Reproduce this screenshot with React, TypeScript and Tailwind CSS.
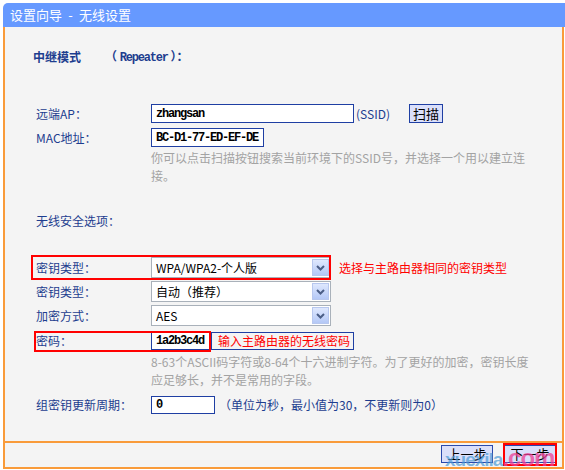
import React from "react";

const label = "w-[115px] shrink-0 text-[#1d3d8f]";
const mono = "font-['Liberation_Mono','Noto_Sans_CJK_SC',monospace] font-bold tracking-[-1.2px] text-black";

function Chevron() {
    return <svg width="9" height="6" viewBox="0 0 9 6">
        <path d="M1 1 L4.5 4.5 L8 1" fill="none" stroke="#4b5e86" strokeWidth="2" />
    </svg>
}

function Select({ value, w = 180 }: { value: string; w?: number }) {
    return <div className="flex h-[21px] items-center justify-between border border-[#a9b1ba] bg-white pl-[4px] pr-[1px] text-black" style={{ width: w }}>
        <span className="leading-none">{value}</span>
        <span className="flex h-[17px] w-[17px] items-center justify-center border border-[#b7c7ee] bg-gradient-to-b from-[#dfe8fe] to-[#b4c8f6]">
            <Chevron />
        </span>
    </div>
}

function Input({ value, w }: { value: string; w: number }) {
    return <div className={`flex h-full items-center border border-[#1f3fa3] bg-white pl-[4px] ${mono}`} style={{ width: w }}>
        {value}
    </div>
}

function Btn({ text }: { text: string }) {
    return <div className="flex h-[18px] w-[52px] items-center justify-center border border-[#2a49ad] bg-[#dadffa] text-[13px] text-black">{text}</div>
}

export default function App() {
    return <div className="relative h-[470px] w-[565px] bg-white pt-[3px] font-['Noto_Sans_CJK_SC','Noto_Sans',sans-serif] text-[12px]">
        <div className="ml-[3px] flex h-[24px] items-center rounded-tl-[5px] bg-[#6699ff] pl-[7px] text-[13px] text-white">
            <span>设置向导</span>
            <span className="inline-block w-[17px] text-center">-</span>
            <span>无线设置</span>
        </div>
        <div className="ml-[3px] w-[561px] border-x-2 border-b-2 border-[#f99b3a] bg-[#f4f4f4]">
            <div className="relative flex h-[414px] flex-col pl-[31px]">
                <div className="-ml-[3px] mt-[21px] flex h-[18px] items-center font-semibold text-[#1d3d8f]">
                    <span>中继模式</span>
                    <span className="ml-[24px]">（ <span className="font-['Liberation_Mono',monospace] tracking-[-1.2px]">Repeater</span> ）：</span>
                </div>
                <div className="mt-[38px] flex h-[19px] items-center">
                    <span className={label}>远端AP：</span>
                    <Input value="zhangsan" w={203} />
                    <span className="ml-[2px] text-[#1d3d8f]">(SSID)</span>
                    <div className="ml-[19px] flex h-[19px] w-[34px] items-center justify-center border border-[#1f3fa3] bg-[#dadffa] text-[13px] text-black">扫描</div>
                </div>
                <div className="mt-[5px] flex h-[19px] items-center">
                    <span className={label}>MAC地址：</span>
                    <Input value="BC-D1-77-ED-EF-DE" w={113} />
                </div>
                <p className="mt-[2px] pl-[115px] leading-[18px] text-[#a3a3a3]">
                    你可以点击扫描按钮搜索当前环境下的SSID号，并选择一个用以建立连<br />接。
                </p>
                <div className="mt-[27px] leading-[18px] text-[#1d3d8f]">无线安全选项：</div>
                <div className="mt-[27px] flex items-center">
                    <span className={label}>密钥类型：</span>
                    <Select value="WPA/WPA2-个人版" />
                    <span className="ml-[8px] text-[#ff0000]">选择与主路由器相同的密钥类型</span>
                </div>
                <div className="mt-[3px] flex items-center">
                    <span className={label}>密钥类型：</span>
                    <Select value="自动（推荐）" />
                </div>
                <div className="mt-[3px] flex items-center">
                    <span className={label}>加密方式：</span>
                    <Select value="AES" />
                </div>
                <div className="mt-[6px] flex h-[18px] items-center">
                    <span className={label}>密码：</span>
                    <Input value="1a2b3c4d" w={61} />
                    <div className="-ml-[1px] flex h-full w-[143px] items-center border border-[#1f3fa3] pl-[6px] text-[#ff0000]">输入主路由器的无线密码</div>
                </div>
                <p className="mt-[3px] pl-[115px] leading-[18px] text-[#a3a3a3]">
                    8-63个ASCII码字符或8-64个十六进制字符。为了更好的加密，密钥长度<br />应足够长，并不是常用的字段。
                </p>
                <div className="mt-[7px] flex h-[18px] items-center">
                    <span className={label}>组密钥更新周期：</span>
                    <Input value="0" w={64} />
                    <span className="ml-[4px] text-[#1d3d8f]">（单位为秒，最小值为30，不更新则为0）</span>
                </div>

                {/* red annotation boxes */}
                <div className="pointer-events-none absolute left-[26px] top-[228px] h-[25px] w-[300px] border-2 border-[#ff0000]" />
                <div className="pointer-events-none absolute left-[29px] top-[304px] h-[21px] w-[177px] border-2 border-[#ff0000]" />
            </div>
            <div className="relative flex h-[26px] items-start justify-end gap-[11px] border-t-2 border-[#f99b3a] pr-[6px] pt-[2px]">
                <Btn text="上一步" />
                <Btn text="下一步" />
                <div className="pointer-events-none absolute right-[5px] top-0 h-[23px] w-[54px] border-2 border-[#ff0000]" />
            </div>
        </div>

        {/* watermark */}
        <div className="pointer-events-none absolute left-[445px] top-[446px] flex items-baseline font-['Liberation_Sans',sans-serif] font-bold leading-none">
            <span className="text-[19px] tracking-[-1px] text-[#4a9ad6]/70">xuexila</span>
            <span className="text-[24px] tracking-[-1px] text-[#ee3f95]/75">.com</span>
        </div>
    </div>
}
